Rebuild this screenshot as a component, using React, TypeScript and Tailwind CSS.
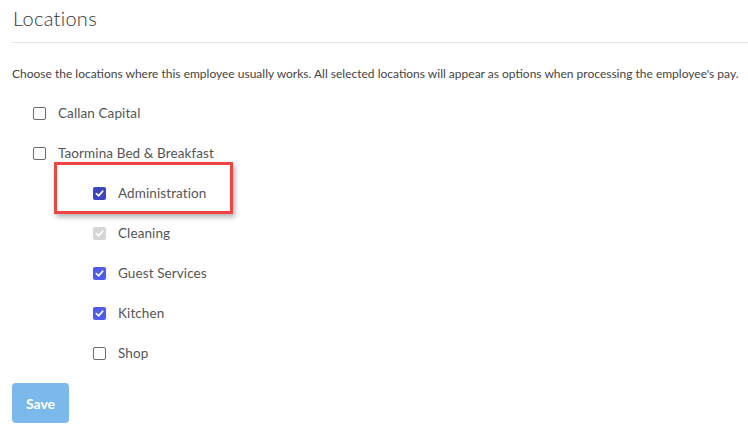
import React from "react";

type State = "on" | "off" | "disabled";

function Box({ state, dark }: { state: State; dark?: boolean }) {
  if (state === "off") {
    return <div className="w-[13px] h-[13px] rounded-[2px] border border-[#6b6b6b] bg-white shrink-0" />;
  }
  const bg = state === "disabled" ? "bg-[#d6d6d6]" : dark ? "bg-[#3c46c4]" : "bg-[#4f5cf0]";
  return (
    <div className={`w-[13px] h-[13px] rounded-[2px] ${bg} shrink-0 flex items-center justify-center`}>
      <svg width="9" height="9" viewBox="0 0 10 10">
        <path d="M1.5 5.2 L4 7.6 L8.6 2.4" stroke="white" strokeWidth="1.8" fill="none" strokeLinecap="round" strokeLinejoin="round" />
      </svg>
    </div>
  );
}

function Row({ label, state, dark }: { label: string; state: State; dark?: boolean }) {
  return (
    <div className="h-[40px] flex items-center gap-[12px]">
      <Box state={state} dark={dark} />
      <span className="text-[13.5px] text-[#555] tracking-[0.1px]">{label}</span>
    </div>
  );
}

export default function App() {
  return (
    <div className="w-[748px] h-[437px] bg-white overflow-hidden font-['Lato',sans-serif]">
      <div className="pl-[12px] pt-[3px]">
        <h1 className="text-[20px] font-light text-[#333] leading-[30px] pl-[1px] tracking-[0.3px]">Locations</h1>
        <div className="mt-[9px] h-px bg-[#e2e2e2]" />
        <p className="mt-[23px] text-[12px] text-[#444] leading-[16px] whitespace-nowrap">
          Choose the locations where this employee usually works. All selected locations will appear as options when processing the employee's pay.
        </p>
        <div className="mt-[11px] pl-[21px]">
          <Row label="Callan Capital" state="off" />
          <Row label="Taormina Bed & Breakfast" state="off" />
          <div className="pl-[60px]">
            <div className="relative">
              <div className="absolute left-[-39px] top-[-11px] w-[179px] h-[52px] border-[3px] border-[#ef4444] shadow-[2px_3px_5px_rgba(0,0,0,0.3)] pointer-events-none" />
              <Row label="Administration" state="on" dark />
            </div>
            <Row label="Cleaning" state="disabled" />
            <Row label="Guest Services" state="on" />
            <Row label="Kitchen" state="on" />
            <Row label="Shop" state="off" />
          </div>
        </div>
        <button className="mt-[10px] w-[57px] h-[40px] rounded-[4px] bg-[#7bb9ec] text-white text-[14px] font-bold">
          Save
        </button>
      </div>
    </div>
  );
}
